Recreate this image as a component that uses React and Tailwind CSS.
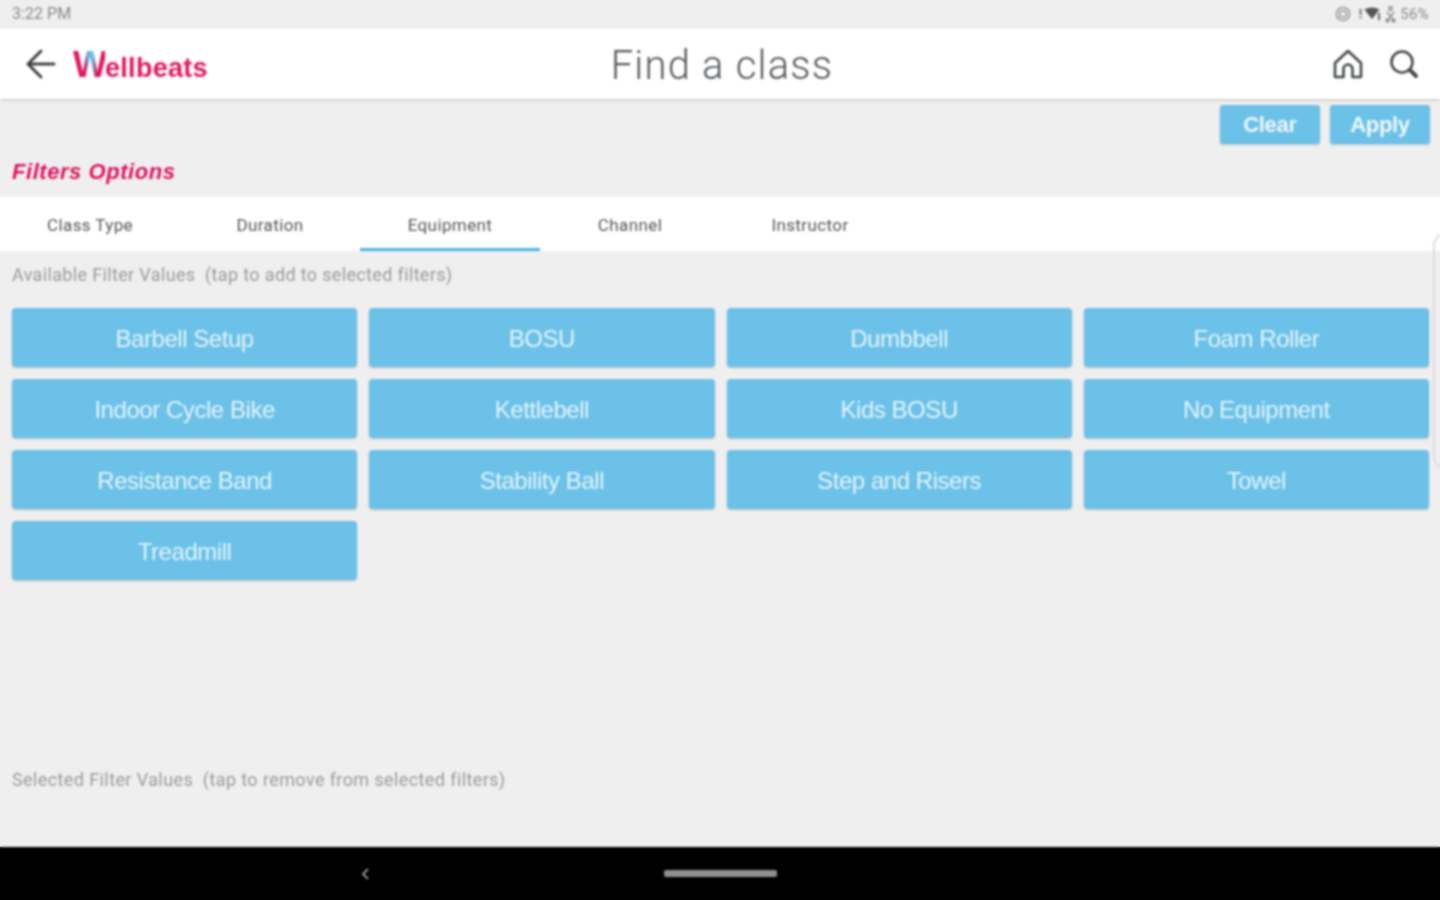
import React from "react";

const tabs = ["Class Type", "Duration", "Equipment", "Channel", "Instructor"];
const values = [
  "Barbell Setup", "BOSU", "Dumbbell", "Foam Roller",
  "Indoor Cycle Bike", "Kettlebell", "Kids BOSU", "No Equipment",
  "Resistance Band", "Stability Ball", "Step and Risers", "Towel",
  "Treadmill",
];

function StatusIcons() {
  return (
    <div className="flex items-center text-[#8a8a8a]">
      <svg width="16" height="16" viewBox="0 0 16 16" fill="none" stroke="#8c8c8c" strokeWidth="1.4">
        <circle cx="8" cy="8" r="6.6" />
        <circle cx="8" cy="8" r="3.4" />
      </svg>
      <svg className="ml-[7px]" width="5" height="12" viewBox="0 0 5 12" fill="#777">
        <rect x="1.5" y="1" width="2" height="6" />
        <rect x="1.5" y="8.5" width="2" height="2" />
      </svg>
      <svg className="ml-[1px]" width="18" height="14" viewBox="0 0 18 14">
        <path d="M0.5 2.5 Q8 -1.5 15.5 2.5 L8 12 Z" fill="#555" />
        <rect x="14" y="6" width="2" height="7" fill="#666" />
      </svg>
      <svg className="ml-[3px]" width="11" height="17" viewBox="0 0 11 17" fill="none" stroke="#8a8a8a" strokeWidth="1.3">
        <path d="M4 1h3v3H4zM2 6l7 9M9 6l-7 9" />
        <circle cx="2.5" cy="14.5" r="1.5" />
        <circle cx="8.5" cy="14.5" r="1.5" />
      </svg>
      <span className="ml-[4px] text-[15px] leading-none tracking-[0.3px]">56%</span>
    </div>
  );
}

function ValueButton({ label }) {
  return (
    <button className="h-[59px] rounded-[4px] bg-[#6bc1e8] pt-[2px] font-['Liberation_Sans',sans-serif] text-[24px] tracking-[-0.45px] text-[#e4f4fb] shadow-[0_1px_2px_rgba(0,0,0,0.22)]">
      {label}
    </button>
  );
}

export default function App() {
  return (
    <div className="h-[900px] w-[1440px] overflow-hidden bg-[linear-gradient(#efefef_0,#efefef_28px,#ffffff_28px,#ffffff_99px,#efefef_99px,#efefef_197px,#ffffff_197px,#ffffff_251px,#efefef_251px,#efefef_847px,#000000_847px)]">
      <div className="relative flex h-[900px] w-[1440px] flex-col overflow-hidden bg-[#efefef] font-['Roboto','Liberation_Sans',sans-serif] blur-[0.8px]">
        <div className="flex h-[28px] shrink-0 items-center justify-between pl-[12px] pr-[11px]">
          <span className="text-[16px] tracking-[0.05px] text-[#8a8a8a]">3:22 PM</span>
          <StatusIcons />
        </div>

        <header className="relative z-10 flex h-[71px] shrink-0 items-center justify-between bg-white pl-[24px] pr-[20px] shadow-[0_1px_3px_rgba(0,0,0,0.2)]">
          <div className="flex w-[300px] items-center">
            <svg width="34" height="34" viewBox="0 0 34 34" fill="none" stroke="#3f4447" strokeWidth="3" strokeLinecap="round" strokeLinejoin="round">
              <path d="M30 17H4M17 4 4 17l13 13" />
            </svg>
            <span className="ml-[15px] flex items-baseline pt-[3px] font-['Liberation_Sans',sans-serif] text-[27px] font-bold leading-none tracking-[0.3px] text-[#e3175f]">
              <span className="bg-[linear-gradient(90deg,#e3175f_0%,#e3175f_38%,#62c2ea_48%,#62c2ea_62%,#e3175f_72%,#e3175f_100%)] bg-clip-text text-[36px] font-bold leading-none tracking-[-2px] text-transparent">
                W
              </span>
              ellbeats
            </span>
          </div>
          <h1 className="pt-[4px] text-[40px] font-light leading-none tracking-[1.2px] text-[#55595c]">Find a class</h1>
          <div className="flex w-[300px] items-center justify-end gap-[24px]">
            <svg width="32" height="32" viewBox="0 0 32 32" fill="none" stroke="#44484b" strokeWidth="2.6" strokeLinejoin="round" strokeLinecap="round">
              <path d="M3 15 16 3l13 12v14H20.5v-8a4.5 4.5 0 0 0-9 0v8H3Z" />
            </svg>
            <svg width="32" height="32" viewBox="0 0 32 32" fill="none" stroke="#44484b" strokeLinecap="round">
              <circle cx="14" cy="14" r="10.5" strokeWidth="2.6" />
              <path d="M23 23l5 5" strokeWidth="4" />
            </svg>
          </div>
        </header>

        <div className="flex justify-end gap-[10px] pr-[10px] pt-[6px]">
          <button className="h-[39px] w-[100px] rounded-[3px] bg-[#6bc1e8] font-['Liberation_Sans',sans-serif] text-[22px] font-bold tracking-[-0.3px] text-[#eef8fc] shadow-[0_1px_2px_rgba(0,0,0,0.2)]">Clear</button>
          <button className="h-[39px] w-[100px] rounded-[3px] bg-[#6bc1e8] font-['Liberation_Sans',sans-serif] text-[22px] font-bold tracking-[-0.3px] text-[#eef8fc] shadow-[0_1px_2px_rgba(0,0,0,0.2)]">Apply</button>
        </div>

        <div className="flex h-[53px] items-center pl-[12px] pt-[2px] font-['Liberation_Sans',sans-serif] text-[22px] font-bold italic tracking-[0.55px] text-[#e0105c]">
          Filters Options
        </div>

        <nav className="flex h-[54px] shrink-0 bg-white">
          {tabs.map((t) => (
            <div
              key={t}
              className={`flex w-[180px] items-center justify-center border-b-[3px] pt-[6px] text-[17px] tracking-[0.4px] text-[#555] ${
                t === "Equipment" ? "border-[#4bb4e2]" : "border-transparent"
              }`}
            >
              {t}
            </div>
          ))}
        </nav>

        <p className="mt-[14px] h-[20px] pl-[12px] text-[18px] leading-[20px] tracking-[0.35px] text-[#9a9a9a]">
          Available Filter Values&nbsp; (tap to add to selected filters)
        </p>

        <div className="mt-[23px] grid grid-cols-4 gap-[12px] pl-[12px] pr-[11px]">
          {values.map((v) => (
            <ValueButton key={v} label={v} />
          ))}
        </div>

        <p className="mt-[190px] h-[20px] pl-[12px] text-[18px] leading-[20px] tracking-[0.4px] text-[#9a9a9a]">
          Selected Filter Values&nbsp; (tap to remove from selected filters)
        </p>

        <div className="mt-auto flex h-[53px] shrink-0 items-center bg-black">
          <svg className="ml-[360px]" width="10" height="14" viewBox="0 0 10 14" fill="none" stroke="#8f8f8f" strokeWidth="2">
            <path d="M8 2 3 7l5 5" />
          </svg>
          <div className="ml-[294px] h-[7px] w-[113px] rounded-[2px] bg-[#8f8f8f]" />
        </div>

        <div className="absolute left-[1433px] top-[232px] h-[238px] w-[30px] rounded-[14px] border-2 border-[#dcdcdc]" />
      </div>
    </div>
  );
}
